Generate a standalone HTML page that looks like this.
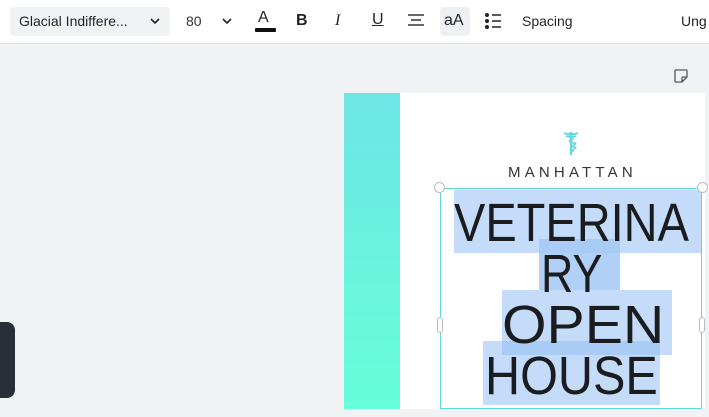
<!DOCTYPE html>
<html><head><meta charset="utf-8"><style>
*{margin:0;padding:0;box-sizing:border-box}
body{width:709px;height:417px;overflow:hidden;background:#f1f2f4;font-family:"Liberation Sans",sans-serif;position:relative}
.tb{position:absolute;left:0;top:0;width:709px;height:44px;background:#fff;border-bottom:1px solid #e2e4e8}
.t{position:absolute;top:13px;font-size:14px;color:#1f2329}
.font{position:absolute;left:10px;top:7px;width:160px;height:29px;background:#f1f2f4;border-radius:4px}
.page{position:absolute;left:344px;top:93px;width:361px;height:316px;background:#fff}
.stripe{position:absolute;left:344px;top:93px;width:56px;height:316px;background:linear-gradient(#6ee5e5,#66ffd9)}
.hl{position:absolute;background:#c4dcfa}
.big{position:absolute;font-size:54px;color:#1b1c1f;line-height:54px;white-space:nowrap;transform-origin:0 0}
.sel{position:absolute;left:440px;top:188px;width:262px;height:221px;border:1.5px solid #5fd8d8}
.hd{position:absolute;width:11px;height:11px;border-radius:50%;background:#fff;border:1px solid #bbb}
</style></head><body>
<div class="tb">
<div class="font"></div>
<div class="t" style="left:19px">Glacial Indiffere...</div>
<svg style="position:absolute;left:149px;top:16px" width="12" height="10"><path d="M2 3l4 4 4-4" stroke="#222" stroke-width="1.6" fill="none"/></svg>
<div class="t" style="left:186px;color:#333">80</div>
<svg style="position:absolute;left:221px;top:16px" width="12" height="10"><path d="M2 3l4 4 4-4" stroke="#222" stroke-width="1.6" fill="none"/></svg>
<div class="t" style="left:258px;top:9px;font-size:16px">A</div>
<div style="position:absolute;left:255px;top:28px;width:21px;height:4px;background:#111;border-radius:1px"></div>
<div class="t" style="left:296px;font-weight:bold;font-size:16px;top:12px">B</div>
<div class="t" style="left:335px;font-style:italic;font-size:16px;top:12px;font-family:'Liberation Serif',serif">I</div>
<div class="t" style="left:372px;font-size:16px;top:11px;text-decoration:underline">U</div>
<svg style="position:absolute;left:407px;top:13px" width="18" height="16"><path d="M1 2h16M4 7h10M1 12h16" stroke="#333" stroke-width="1.5"/></svg>
<div style="position:absolute;left:440px;top:7px;width:30px;height:29px;background:#eef0f3;border-radius:4px"></div>
<div class="t" style="left:444px;font-size:16px;top:12px">aA</div>
<svg style="position:absolute;left:484px;top:12px" width="18" height="18"><circle cx="3" cy="3" r="2" fill="#222"/><circle cx="3" cy="9" r="2" fill="#222"/><circle cx="3" cy="15" r="2" fill="#222"/><path d="M8 3h9M8 9h9M8 15h9" stroke="#222" stroke-width="1.5"/></svg>
<div class="t" style="left:522px">Spacing</div>
<div class="t" style="left:681px">Ung</div>
</div>
<svg style="position:absolute;left:673px;top:68px" width="16" height="16"><path d="M2 3a1 1 0 0 1 1-1h10a1 1 0 0 1 1 1v6l-5 5H3a1 1 0 0 1-1-1z M9 14v-4a1 1 0 0 1 1-1h4" stroke="#555" stroke-width="1.3" fill="none"/></svg>
<div style="position:absolute;left:0;top:322px;width:15px;height:76px;background:#2a2e39;border-radius:0 8px 8px 0"></div>
<div class="page"></div>
<div class="stripe"></div>
<svg style="position:absolute;left:561px;top:130px" width="20" height="26"><path d="M3 3q7 3 14 0M5 6q5 2 10 0" stroke="#5fd8e0" stroke-width="2" fill="none"/><circle cx="10" cy="4" r="2" fill="#5fd8e0"/><path d="M10 5v20" stroke="#5fd8e0" stroke-width="2"/><path d="M13 9c-6 0-6 4 0 4s-6 4 0 4-6 4 0 4" stroke="#5fd8e0" stroke-width="1.6" fill="none"/></svg>
<div style="position:absolute;left:508px;top:164px;font-size:15px;letter-spacing:4.2px;color:#333">MANHATTAN</div>
<div class="hl" style="left:454px;top:190px;width:248px;height:63px"></div>
<div class="hl" style="left:539px;top:239px;width:81px;height:64px;background:#b0d0f8"></div>
<div class="hl" style="left:502px;top:290px;width:170px;height:65px"></div>
<div class="hl" style="left:483px;top:341px;width:177px;height:64px"></div>
<div class="hl" style="left:539px;top:239px;width:81px;height:14px;background:#a9ccf7"></div>
<div class="hl" style="left:502px;top:341px;width:158px;height:14px;background:#a9ccf7"></div>
<div class="big" style="left:454px;top:196px;transform:scaleX(0.87)">VETERINA</div>
<div class="big" style="left:541px;top:247px;transform:scaleX(0.83)">RY</div>
<div class="big" style="left:502px;top:298px;transform:scaleX(1.06)">OPEN</div>
<div class="big" style="left:485px;top:349px;transform:scaleX(0.9)">HOUSE</div>
<div class="sel"></div>
<div class="hd" style="left:434px;top:182px"></div>
<div class="hd" style="left:697px;top:182px"></div>
<div style="position:absolute;left:437px;top:317px;width:6px;height:16px;background:#fff;border:1px solid #bbb;border-radius:3px"></div>
<div style="position:absolute;left:699px;top:317px;width:6px;height:16px;background:#fff;border:1px solid #bbb;border-radius:3px"></div>
</body></html>
